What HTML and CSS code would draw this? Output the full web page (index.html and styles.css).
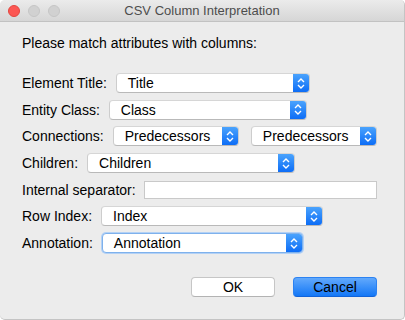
FILE: index.html
```html
<!DOCTYPE html>
<html lang="en">
<head>
    <meta charset="UTF-8">
    <title>CSV Column Interpretation</title>
    <link rel="stylesheet" href="styles.css">
</head>
<body>
    <div class="window">
        <div class="titlebar">
            <div class="lights">
                <span class="light close"></span>
                <span class="light"></span>
                <span class="light"></span>
            </div>
            <div class="title">CSV Column Interpretation</div>
        </div>

        <div class="content">
            <p class="intro">Please match attributes with columns:</p>

            <div class="rows">
                <div class="row">
                    <label>Element Title:</label>
                    <div class="combo w-title"><span class="value">Title</span><span class="arrow"><svg width="16" height="19" viewBox="0 0 16 19"><path d="M5 8 L8 5 L11 8 M5 11 L8 14 L11 11" /></svg></span></div>
                </div>
                <div class="row">
                    <label>Entity Class:</label>
                    <div class="combo w-class"><span class="value">Class</span><span class="arrow"><svg width="16" height="19" viewBox="0 0 16 19"><path d="M5 8 L8 5 L11 8 M5 11 L8 14 L11 11" /></svg></span></div>
                </div>
                <div class="row">
                    <label>Connections:</label>
                    <div class="combo w-conn"><span class="value">Predecessors</span><span class="arrow"><svg width="16" height="19" viewBox="0 0 16 19"><path d="M5 8 L8 5 L11 8 M5 11 L8 14 L11 11" /></svg></span></div>
                    <div class="combo w-conn second"><span class="value">Predecessors</span><span class="arrow"><svg width="16" height="19" viewBox="0 0 16 19"><path d="M5 8 L8 5 L11 8 M5 11 L8 14 L11 11" /></svg></span></div>
                </div>
                <div class="row">
                    <label>Children:</label>
                    <div class="combo w-children"><span class="value">Children</span><span class="arrow"><svg width="16" height="19" viewBox="0 0 16 19"><path d="M5 8 L8 5 L11 8 M5 11 L8 14 L11 11" /></svg></span></div>
                </div>
                <div class="row">
                    <label>Internal separator:</label>
                    <input class="field" type="text">
                </div>
                <div class="row">
                    <label>Row Index:</label>
                    <div class="combo w-index"><span class="value">Index</span><span class="arrow"><svg width="16" height="19" viewBox="0 0 16 19"><path d="M5 8 L8 5 L11 8 M5 11 L8 14 L11 11" /></svg></span></div>
                </div>
                <div class="row">
                    <label>Annotation:</label>
                    <div class="combo w-annot focused"><span class="value">Annotation</span><span class="arrow"><svg width="16" height="19" viewBox="0 0 16 19"><path d="M5 8 L8 5 L11 8 M5 11 L8 14 L11 11" /></svg></span></div>
                </div>
            </div>

            <div class="buttons">
                <button class="btn">OK</button>
                <button class="btn primary">Cancel</button>
            </div>
        </div>
    </div>
</body>
</html>
```

FILE: styles.css
```css
body {
    margin: 0;
    background: #fff;
    font-family: "Liberation Sans", Arial, sans-serif;
    font-size: 14px;
    color: #000;
}

.window {
    width: 405px;
    height: 320px;
    box-sizing: border-box;
    background: #ececec;
    border-radius: 5px;
    border-right: 1px solid #c4c4c4;
    border-bottom: 1px solid #c4c4c4;
    overflow: hidden;
}

/* title bar */
.titlebar {
    height: 22px;
    display: flex;
    align-items: center;
    background: linear-gradient(#ebebeb, #d6d6d6);
    border-bottom: 1px solid #c2c2c2;
    box-sizing: border-box;
    position: relative;
}

.lights {
    display: flex;
    gap: 8px;
    padding-left: 8px;
}

.light {
    width: 12px;
    height: 12px;
    border-radius: 50%;
    background: #d1d1d1;
    box-sizing: border-box;
    border: 1px solid #c5c5c5;
}

.light.close {
    background: #fc5753;
    border-color: #e2463f;
}

.title {
    position: absolute;
    left: 0;
    right: 0;
    text-align: center;
    font-size: 13px;
    color: #4d4d4d;
    pointer-events: none;
}

/* content */
.content {
    padding: 13px 27px 0 22px;
}

.intro {
    margin: 0 0 22px;
    line-height: 16px;
}

.rows {
    display: flex;
    flex-direction: column;
    gap: 6.7px;
}

.row {
    display: flex;
    align-items: center;
    gap: 9px;
    height: 20px;
}

.row label {
    white-space: nowrap;
}

.combo {
    height: 20px;
    box-sizing: border-box;
    display: flex;
    align-items: stretch;
    background: #fff;
    border: 1px solid #cdcdcd;
    border-top-color: #d6d6d6;
    border-bottom-color: #b9b9b9;
    border-radius: 4px;
    overflow: hidden;
}

.combo .value {
    flex: 1;
    padding-left: 11px;
    line-height: 18px;
}

.combo .arrow {
    width: 16px;
    background: linear-gradient(#4aa3fd, #0d6df6);
    display: flex;
    align-items: center;
    justify-content: center;
}

.arrow svg path {
    fill: none;
    stroke: #fff;
    stroke-width: 1.4;
}

.combo.focused {
    border-color: #7eb1ec;
    box-shadow: 0 0 0 1px #b3d1f5;
}

.combo.second {
    margin-left: 3px;
}

.w-title { width: 194px; }
.w-class { width: 198px; }
.w-conn { width: 127px; }
.w-children { width: 208px; }
.w-index { width: 222px; }
.w-annot { width: 201px; }

.field {
    width: 236px;
    height: 18px;
    box-sizing: border-box;
    border: 1px solid #c9c9c9;
    background: #fff;
    margin: 0 0 0 -1px;
    padding: 0;
}

/* buttons */
.buttons {
    display: flex;
    justify-content: flex-end;
    gap: 18px;
    margin-top: 24px;
}

.btn {
    width: 84px;
    height: 20px;
    font-family: "Liberation Sans", Arial, sans-serif;
    font-size: 14px;
    color: #000;
    background: #fff;
    border: 1px solid #c6c6c6;
    border-bottom-color: #b3b3b3;
    border-radius: 4px;
    padding: 0;
}

.btn.primary {
    background: linear-gradient(#62a9fc, #1377f6);
    border-color: #2c82f2;
    border-bottom-color: #1163d9;
}
```
